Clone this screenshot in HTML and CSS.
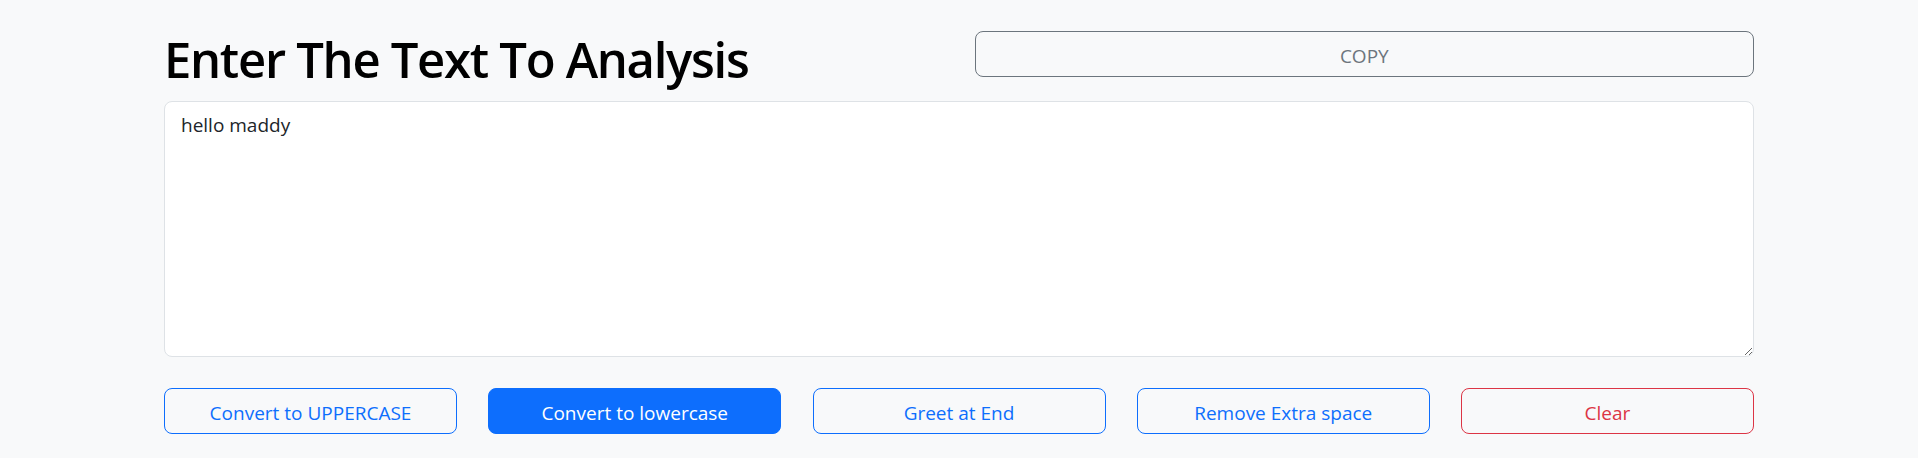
FILE: index.html
```html
<!DOCTYPE html>
<html lang="en">
<head>
<meta charset="utf-8">
<title>Text Utils</title>
<link rel="stylesheet" href="styles.css">
</head>
<body>
<main class="container">
  <div class="top-row">
    <h1 class="title">Enter The Text To Analysis</h1>
    <button class="btn btn-outline-secondary copy">COPY</button>
  </div>
  <textarea class="text-input">hello maddy</textarea>
  <div class="actions">
    <button class="btn btn-outline-primary">Convert to UPPERCASE</button>
    <button class="btn btn-primary">Convert to lowercase</button>
    <button class="btn btn-outline-primary">Greet at End</button>
    <button class="btn btn-outline-primary">Remove Extra space</button>
    <button class="btn btn-outline-danger">Clear</button>
  </div>
</main>
</body>
</html>
```

FILE: styles.css
```css
html, body {
  margin: 0;
  padding: 0;
  background: #f8f9fa;
  font-family: "Open Sans", "Noto Sans", sans-serif;
  color: #212529;
}

.container {
  width: 1590px;
  margin: 0 auto;
}

.top-row {
  display: grid;
  grid-template-columns: 1fr 1fr;
  column-gap: 31.25px;
  align-items: start;
}

.title {
  margin: 29px 0 0;
  font-size: 49px;
  line-height: 60px;
  font-weight: 600;
  color: #000;
  letter-spacing: -1.3px;
}

.btn {
  box-sizing: border-box;
  height: 46px;
  padding: 4px 16px 0;
  font-family: inherit;
  font-size: 19px;
  line-height: 28px;
  border-radius: 8px;
  border: 1px solid transparent;
  background: transparent;
  cursor: pointer;
}

.copy {
  margin-top: 31px;
  width: 100%;
}

.btn-outline-secondary {
  color: #6c757d;
  border-color: #6c757d;
}

.btn-outline-primary {
  color: #0d6efd;
  border-color: #0d6efd;
}

.btn-primary {
  color: #fff;
  background: #0d6efd;
  border-color: #0d6efd;
}

.btn-outline-danger {
  color: #dc3545;
  border-color: #dc3545;
}

.text-input {
  display: block;
  box-sizing: border-box;
  width: 100%;
  height: 256px;
  margin-top: 12px;
  padding: 8px 16px;
  font-family: inherit;
  font-size: 19px;
  line-height: 30px;
  color: #212529;
  background: #fff;
  border: 1px solid #dee2e6;
  border-radius: 8px;
}

.actions {
  display: grid;
  grid-template-columns: repeat(5, 1fr);
  column-gap: 31.25px;
  margin-top: 31px;
}
```
